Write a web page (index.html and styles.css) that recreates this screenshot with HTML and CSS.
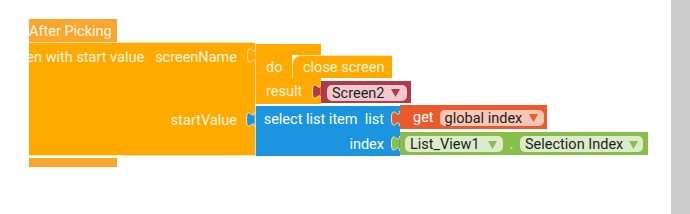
FILE: index.html
```html
<!DOCTYPE html>
<html>
<head>
<meta charset="utf-8">
<link rel="stylesheet" href="styles.css">
</head>
<body>
<div class="screen">
  <div class="workspace">
    <div class="proc">
      <div class="hat">After Picking</div>
      <div class="main">
        <div class="main-left">
          <div class="lrow lrow-top"><span>open another screen with start value</span><span class="name">screenName</span></div>
          <div class="lrow lrow-start"><span>startValue</span></div>
        </div>
        <div class="main-right">
          <div class="doblock">
            <svg class="tab tab-do" width="9" height="15" viewBox="0 0 9 15"><path d="M8.5 0 c0 10 -8 -8 -8 7.5 s8 -2.5 8 7.5" class="tab-orange"/></svg>
            <div class="do-top"></div>
            <div class="do-row">
              <div class="do-label">do</div>
              <div class="stmt">close screen</div>
            </div>
            <div class="do-result">
              <div class="res-label">result</div>
              <div class="val maroon">
                <svg class="tab tab-maroon" width="9" height="15" viewBox="0 0 9 15"><path d="M8.5 0 c0 10 -8 -8 -8 7.5 s8 -2.5 8 7.5" class="tab-mar"/></svg>
                <span class="field f-maroon">Screen2<svg class="arr" width="9" height="8" viewBox="0 0 9 8"><polygon points="0,0 9,0 4.5,8"/></svg></span>
              </div>
            </div>
          </div>
          <div class="select">
            <svg class="tab tab-blue" width="9" height="15" viewBox="0 0 9 15"><path d="M8.5 0 c0 10 -8 -8 -8 7.5 s8 -2.5 8 7.5" class="tab-bl"/></svg>
            <div class="sel-body">
              <div class="sel-row">select list item&nbsp; list</div>
              <div class="sel-row">index</div>
            </div>
            <div class="sel-inputs">
              <div class="val get">
                <svg class="tab tab-get" width="9" height="15" viewBox="0 0 9 15"><path d="M8.5 0 c0 10 -8 -8 -8 7.5 s8 -2.5 8 7.5" class="tab-red"/></svg>
                <span class="lbl">get</span>
                <span class="field f-get">global index<svg class="arr" width="9" height="8" viewBox="0 0 9 8"><polygon points="0,0 9,0 4.5,8"/></svg></span>
              </div>
              <div class="val green">
                <svg class="tab tab-green" width="9" height="15" viewBox="0 0 9 15"><path d="M8.5 0 c0 10 -8 -8 -8 7.5 s8 -2.5 8 7.5" class="tab-gr"/></svg>
                <span class="field f-green f-list">List_View1<svg class="arr" width="9" height="8" viewBox="0 0 9 8"><polygon points="0,0 9,0 4.5,8"/></svg></span>
                <span class="dot">.</span>
                <span class="field f-green f-sel">Selection Index<svg class="arr" width="9" height="8" viewBox="0 0 9 8"><polygon points="0,0 9,0 4.5,8"/></svg></span>
              </div>
            </div>
          </div>
        </div>
      </div>
      <div class="foot"></div>
    </div>
  </div>
  <div class="scrollbar"></div>
</div>
</body>
</html>
```
FILE: styles.css
```css
* { box-sizing: border-box; }
html, body { margin: 0; padding: 0; background: #fff; }
body { font-family: Roboto, "Noto Sans", sans-serif; font-size: 14.5px; color: #fff; }

.screen { display: flex; width: 690px; height: 214px; overflow: hidden; }
.workspace { flex: 1; padding: 19px 0 0 29px; overflow: hidden; }
.scrollbar { width: 19px; background: #cccccc; }

.proc { display: flex; flex-direction: column; align-items: flex-start; }

.hat {
  width: 88px; height: 23px; line-height: 23px; padding-top: 1px;
  background: #f9a62e; color: #fff8ea;
  white-space: nowrap; overflow: hidden;
}

.main { display: flex; align-items: flex-start; }

.main-left {
  width: 226px; height: 114px;
  background: #ffaa00;
  border-top: 1px solid #ffe2a6; border-bottom: 1px solid #ffe2a6;
  padding-right: 18px;
  overflow: hidden;
  color: #fff6e0;
}
.lrow { display: flex; justify-content: flex-end; white-space: nowrap; }
.lrow-top { margin-top: 1px; height: 23px; line-height: 23px; padding-top: 2px; }
.lrow-top .name { margin-left: 11px; }
.lrow-start { margin-top: 39px; height: 25px; line-height: 25px; padding-top: 2px; }

.main-right { display: flex; flex-direction: column; align-items: flex-start; }

.tab { position: absolute; left: -9px; overflow: visible; }
.tab path { stroke: #ffe2a6; stroke-width: 1; }
.tab-orange { fill: #ffaa00; }
.tab-mar { fill: #b03a48; }
.tab-bl { fill: #1b95e0; }
.tab-red { fill: #ea5a2a; }
.tab-gr { fill: #88bf4a; }

.doblock {
  position: relative;
  display: flex; flex-direction: column; align-items: flex-start;
  margin-top: 2px; height: 60px;
  border-left: 1px solid #ffe2a6;
  color: #fff6e0;
}
.tab-do { top: 4px; }
.do-top { width: 65px; height: 11px; background: #ffaa00; }
.do-row { display: flex; height: 23px; }
.do-label { width: 36px; background: #ffaa00; padding: 1px 0 0 10px; line-height: 23px; }
.stmt {
  width: 100px; background: #ffaa00; line-height: 22px;
  padding: 1px 0 0 10px;
  border-top: 1px solid #ffe2a6; border-left: 1px solid #ffe2a6;
  border-top-left-radius: 9px;
}
.do-result { display: flex; height: 26px; }
.res-label { width: 65px; background: #ffaa00; padding: 1px 0 0 10px; line-height: 26px; }

.val { position: relative; display: flex; align-items: center; }
.maroon { margin-top: 3px; height: 22px; width: 90px; background: #b03a48; padding: 1px 0 0 6px; }
.tab-maroon { top: 3px; }

.field {
  display: inline-flex; align-items: center; justify-content: space-between;
  height: 16px; border-radius: 5px;
  color: #1e1e1e; padding: 1px 6px 0 5px;
  white-space: nowrap;
}
.arr { flex: none; margin-left: 6px; }
.f-maroon { background: #f1c9ce; width: 80px; padding-right: 11px; }
.f-maroon .arr { fill: #b03a48; }

.select { position: relative; display: flex; margin-top: 2px; height: 50px; }
.tab-blue { top: 6px; }
.sel-body {
  width: 145px; height: 50px; background: #1b95e0;
  border-left: 1px solid #bfe0f7;
  padding-right: 16px; text-align: right; white-space: nowrap;
}
.sel-row { height: 25px; line-height: 25px; padding-top: 1px; }
.sel-inputs { display: flex; flex-direction: column; align-items: flex-start; }

.get { margin-top: -1px; height: 24px; width: 147px; background: #ea5a2a; padding: 1px 0 0 13px; }
.tab-get { top: 6px; }
.get .lbl { margin-right: 6px; }
.f-get { background: #f9c7b7; width: 104px; height: 16px; }
.f-get .arr { fill: #ea5a2a; }

.green { margin-top: 3px; height: 23px; width: 248px; background: #88bf4a; padding: 1px 0 0 5px; }
.tab-green { top: 4px; }
.f-green { background: #dcebc9; height: 16px; }
.f-green .arr { fill: #88bf4a; }
.f-list { width: 98px; }
.f-sel { width: 123px; }
.dot { width: 17px; text-align: center; color: #fff; }

.foot { margin-top: 2px; width: 88px; height: 9px; background: #f9a62e; }
```
